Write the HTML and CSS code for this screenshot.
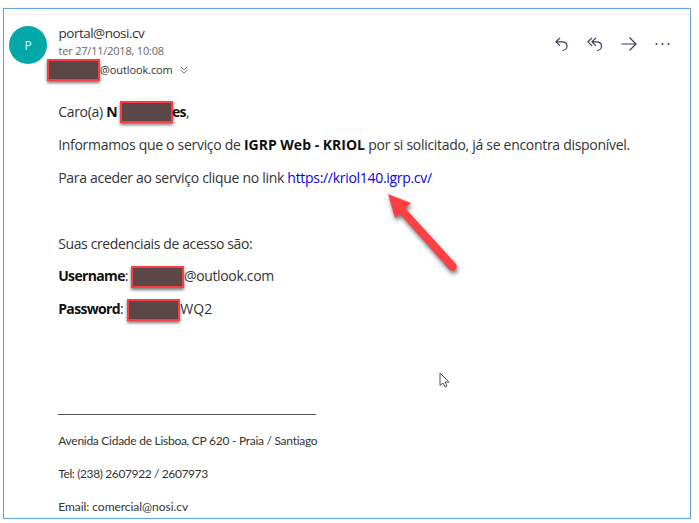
FILE: index.html
```html
<!DOCTYPE html>
<html lang="pt">
<head>
<meta charset="utf-8">
<title>portal@nosi.cv</title>
<link rel="stylesheet" href="styles.css">
</head>
<body>
<main class="frame">
  <header class="header">
    <div class="avatar">P</div>
    <div class="meta">
      <div class="sender">portal@nosi.cv</div>
      <div class="date">ter 27/11/2018, 10:08</div>
      <div class="recipient"><span class="redacted"></span><span class="address">@outlook.com</span>
        <svg class="chevrons" width="8" height="8" viewBox="0 0 8 8"><path d="M.5.7 4 3.7 7.5.7M.5 4 4 7 7.5 4"/></svg>
      </div>
    </div>
    <nav class="actions">
      <svg width="14" height="15" viewBox="0 0 14 15"><path d="M5 .8 1 4.800l4 4M1 4.800H7c3 0 5 1.700 5 4.200S10 13.500 7.200 13.500"/></svg>
      <svg width="16" height="15" viewBox="0 0 16 15"><path d="M5 .8 1 4.800l4 4M9 .8 5 4.800l4 4M5 4.800h4.500c3 0 5 1.700 5 4.200S12.500 13.500 10 13.500"/></svg>
      <svg width="16" height="15" viewBox="0 0 16 15"><path d="M.5 7h14.500M8.500.5 15 7l-6.500 6.500"/></svg>
      <svg class="dots" width="15" height="15" viewBox="0 0 15 15"><circle cx="1.500" cy="7" r="1"/><circle cx="7.500" cy="7" r="1"/><circle cx="13.500" cy="7" r="1"/></svg>
    </nav>
  </header>
  <article class="message">
    <p class="greeting">Caro(a) <b>N</b><span class="redacted"></span><b class="tail">es</b>,</p>
    <p class="intro">Informamos que o serviço de <b>IGRP Web - KRIOL</b> por si solicitado, já se encontra disponível.</p>
    <p class="access">Para aceder ao serviço clique no link <a>https://kriol140.igrp.cv/</a></p>
    <p></p>
    <p class="credentials">Suas credenciais de acesso são:</p>
    <p class="username"><b>Username</b>: <span class="redacted"></span>@outlook.com</p>
    <p class="password"><b>Password</b>: <span class="redacted"></span>WQ2</p>
    <p></p>
    <p></p>
    <footer class="signature">
      <p class="rule"></p>
      <p class="street">Avenida Cidade de Lisboa, CP 620 - Praia / Santiago</p>
      <p class="phone">Tel: (238) 2607922 / 2607973</p>
      <p class="email">Email: comercial@nosi.cv</p>
    </footer>
  </article>
</main>
<svg class="pointer-arrow" width="80" height="90" viewBox="0 0 80 90"><path d="M8 8 31 17 25 22 76 78Q78 82 75 84Q72 86 69 83L20 28 15 32Z"/></svg>
<svg class="cursor" width="12" height="17" viewBox="0 0 12 17"><path d="M1 1v12.500l3-2.500 2 4 2-1-2-4h4z"/></svg>
</body>
</html>
```
FILE: styles.css
```css
* { box-sizing: border-box; }
body {
  margin: 0;
  padding: 8px 8px 4px 3px;
  height: 523px;
  overflow: hidden;
  background: #fff;
  color: #333;
  font-family: "Open Sans", "Noto Sans", sans-serif;
}
.frame {
  height: 511px;
  border: 1px solid #67a5dc;
  box-shadow: 0 0 1px #a9cdec, inset 0 0 1px #a9cdec;
  overflow: hidden;
}
.header {
  display: flex;
  height: 87px;
  padding: 14px 20px 0 5px;
  border-top: 5px solid #fff;
  box-shadow: inset 0 1px #f1f1f1;
}
.avatar {
  display: grid;
  place-items: center;
  width: 38px;
  height: 38px;
  margin-top: -2px;
  border-radius: 50%;
  background: #00a8a8;
  color: #e3fafa;
  font-size: 12px;
}
.meta { margin: -4px 0 0 11.5px; flex: 1; white-space: nowrap; }
.sender { height: 18px; line-height: 19px; font-size: 13.5px; letter-spacing: -.5px; }
.date { height: 17px; line-height: 18px; font-size: 11px; letter-spacing: -.2px; color: #666; }
.recipient { display: flex; align-items: center; height: 22px; margin-left: -11.5px; font-size: 11px; }
.recipient .address { margin-top: -2px; letter-spacing: -.1px; }
.redacted {
  display: inline-block;
  width: 53px;
  height: 22px;
  border: 2px solid #f83e40;
  background: #5b4747;
  box-shadow: 0 2px 3px #777;
  vertical-align: middle;
}
.chevrons { margin: -1px 0 0 7px; fill: none; stroke: #666; stroke-width: .9; }
.actions { display: flex; align-items: center; height: 15px; margin-top: 9px; fill: none; stroke: #343b5c; stroke-width: 1.2; gap: 18px; }
.actions .dots { fill: #343b5c; stroke: none; }
.message { padding-left: 54.2px; font-size: 14px; letter-spacing: -.3px; white-space: nowrap; }
p { margin: 0; height: 32.9px; line-height: 32.9px; }
b { color: #111; letter-spacing: -.65px; }
a { color: #0d00ee; }
.greeting .redacted { margin: -3px 0 0 3px; }
.greeting .tail { margin-left: -1px; }
.intro b { letter-spacing: 0; }
.credentials { letter-spacing: -.38px; }
.username .redacted, .password .redacted { margin-top: -1px; }
.username .redacted { margin-left: -.5px; }
.username { letter-spacing: -.35px; }
.password { letter-spacing: 0; }
.signature { font-family: Lato, sans-serif; font-size: 12px; font-variant-ligatures: common-ligatures; }
.rule::before { content: ""; display: inline-block; width: 258px; height: 1px; background: #555; vertical-align: -3px; }
.street { letter-spacing: -.27px; }
.phone { letter-spacing: -.38px; }
.email { letter-spacing: -.04px; }
.pointer-arrow { position: absolute; left: 380px; top: 186px; fill: #fc4144; filter: drop-shadow(1px 3px 2px #777); }
.cursor { position: absolute; left: 439px; top: 372px; fill: #fff; stroke: #4b4b57; stroke-width: 1; }
```
